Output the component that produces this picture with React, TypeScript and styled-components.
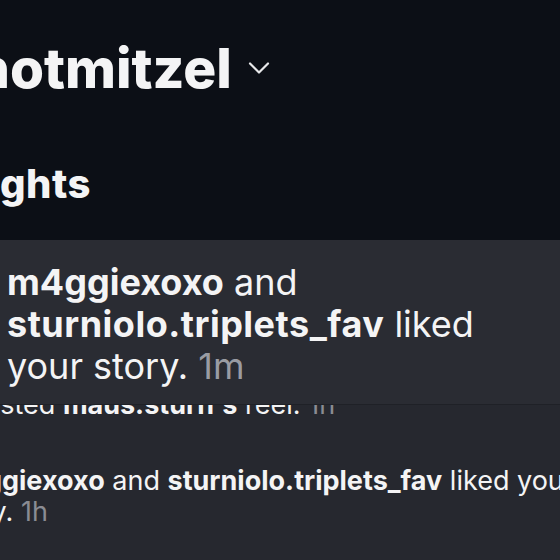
import React from 'react';
import styled, { createGlobalStyle } from 'styled-components';

const GlobalStyle = createGlobalStyle`
  html, body {
    margin: 0;
    padding: 0;
    background: #0c0f16;
  }
  body {
    font-family: Inter, "Noto Sans", "Liberation Sans", sans-serif;
    color: #f4f4f5;
  }
`;

const Page = styled.div`
  width: 560px;
  height: 560px;
  overflow: hidden;
  display: flex;
  flex-direction: column;
  background: #0c0f16;
`;

const Header = styled.div`
  display: flex;
  align-items: center;
  gap: 16px;
  padding-top: 40px;
  height: 56px;
`;

const Username = styled.h1`
  margin: 0 0 0 -25px;
  font-size: 55px;
  line-height: 56px;
  font-weight: 800;
  white-space: nowrap;
`;

const SectionTitle = styled.h2`
  margin: 67px 0 0 -118px;
  font-size: 40px;
  line-height: 41px;
  font-weight: 800;
  letter-spacing: 0.5px;
  white-space: nowrap;
`;

const Feed = styled.div`
  position: relative;
  flex: 1;
  margin-top: 36px;
  background: #26282f;
  display: flex;
  flex-direction: column;
  gap: 45px;
  padding: 149px 0 0 0;
`;

const Banner = styled.div`
  position: absolute;
  top: 0;
  left: 0;
  right: 0;
  height: 165px;
  box-sizing: border-box;
  padding: 21px 0 0 7px;
  background: #2a2c33;
  border-bottom: 1px solid #1f2127;
  z-index: 2;
`;

const BannerLine = styled.div`
  font-size: 36px;
  line-height: 42px;
  white-space: nowrap;
`;

const Item = styled.div`
  margin-left: -58px;
  display: flex;
  flex-direction: column;
`;

const ItemLine = styled.div`
  font-size: 27px;
  line-height: 31px;
  white-space: nowrap;
`;

const Name = styled.b<{ $wide?: boolean }>`
  font-weight: 700;
  letter-spacing: ${(p) => (p.$wide ? '0.5px' : '0')};
`;

const Time = styled.span<{ $light?: boolean }>`
  color: ${(p) => (p.$light ? '#9a9ca3' : '#8a8c93')};
`;

const Chevron = () => (
  <svg width="22" height="14" viewBox="0 0 22 14" fill="none">
    <path d="M2 2.5 L11 11.5 L20 2.5" stroke="#e8e8ea" strokeWidth="2.2" strokeLinecap="round" strokeLinejoin="round" />
  </svg>
);

export default function App() {
  return (
    <Page>
      <GlobalStyle />
      <Header>
        <Username>hotmitzel</Username>
        <Chevron />
      </Header>
      <SectionTitle>Highlights</SectionTitle>
      <Feed>
        <Banner>
          <BannerLine>
            <Name>m4ggiexoxo</Name> and
          </BannerLine>
          <BannerLine>
            <Name $wide>sturniolo.triplets_fav</Name> liked
          </BannerLine>
          <BannerLine>
            your story. <Time $light>1m</Time>
          </BannerLine>
        </Banner>
        <Item>
          <ItemLine>
            reposted <Name>maus.sturn's</Name> reel. <Time>1h</Time>
          </ItemLine>
        </Item>
        <Item>
          <ItemLine>
            <Name>m4ggiexoxo</Name> and <Name>sturniolo.triplets_fav</Name> liked your
          </ItemLine>
          <ItemLine>
            story. <Time>1h</Time>
          </ItemLine>
        </Item>
      </Feed>
    </Page>
  );
}
